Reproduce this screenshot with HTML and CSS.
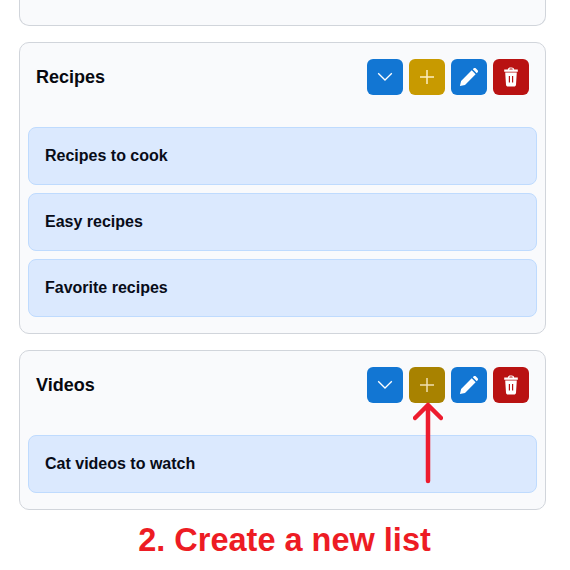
FILE: index.html
```html
<!DOCTYPE html>
<html lang="en">
<head>
<meta charset="utf-8">
<title>Lists</title>
<link rel="stylesheet" href="styles.css">
</head>
<body>
<main class="page">
  <section class="card card-cut"></section>
  <section class="card">
    <header class="card-head">
      <h2 class="card-title">Recipes</h2>
      <div class="actions">
        <button class="btn btn-blue" aria-label="Expand"><svg viewBox="0 0 20 20" class="ic"><path d="M3.200 6.300L10 13l6.800-6.700" fill="none" stroke="#fff" stroke-width="1.300"/></svg></button>
        <button class="btn btn-gold" aria-label="Add"><svg viewBox="0 0 20 20" class="ic"><path d="M10 3v14M3 10h14" fill="none" stroke="#fdeec2" stroke-width="1.500"/></svg></button>
        <button class="btn btn-blue" aria-label="Edit"><svg viewBox="-1 -1 22 22" class="ic"><path d="M0 20l1.300-5.600L13 2.700l4.300 4.300L5.600 18.700zM14.200 1.500l1-1c.7-.6 1.600-.6 2.200 0l2.100 2.100c.6.600.6 1.500 0 2.200l-1 1z" fill="#fff"/></svg></button>
        <button class="btn btn-red" aria-label="Delete"><svg viewBox="0 0 20 20" class="ic"><path d="M6.800 2.600C6.800 1.200 8 .4 9.200.4h1.600c1.200 0 2.400.8 2.400 2.200h3.600v2.100H3.200V2.600zM8.300 2.600h3.400c0-.6-.4-1-.9-1H9.200c-.5 0-.9.400-.9 1zM4.200 5.600h11.600l-.8 12.200c-.1 1-.9 1.800-1.900 1.800H6.900c-1 0-1.800-.8-1.900-1.800zM7.800 9v6.500h1.200V9zM11 9v6.500h1.200V9z" fill="#fff" fill-rule="evenodd"/></svg></button>
      </div>
    </header>
    <ul class="items">
      <li class="item">Recipes to cook</li>
      <li class="item">Easy recipes</li>
      <li class="item">Favorite recipes</li>
    </ul>
  </section>
  <section class="card">
    <header class="card-head">
      <h2 class="card-title">Videos</h2>
      <div class="actions">
        <button class="btn btn-blue" aria-label="Expand"><svg viewBox="0 0 20 20" class="ic"><path d="M3.200 6.300L10 13l6.800-6.700" fill="none" stroke="#fff" stroke-width="1.300"/></svg></button>
        <button class="btn btn-gold-dark" aria-label="Add"><svg viewBox="0 0 20 20" class="ic"><path d="M10 3v14M3 10h14" fill="none" stroke="#f0e0b0" stroke-width="1.500"/></svg></button>
        <button class="btn btn-blue" aria-label="Edit"><svg viewBox="-1 -1 22 22" class="ic"><path d="M0 20l1.300-5.600L13 2.700l4.300 4.300L5.600 18.700zM14.200 1.500l1-1c.7-.6 1.600-.6 2.200 0l2.100 2.100c.6.600.6 1.500 0 2.200l-1 1z" fill="#fff"/></svg></button>
        <button class="btn btn-red" aria-label="Delete"><svg viewBox="0 0 20 20" class="ic"><path d="M6.800 2.600C6.800 1.200 8 .4 9.200.4h1.600c1.200 0 2.400.8 2.400 2.200h3.600v2.100H3.200V2.600zM8.300 2.600h3.400c0-.6-.4-1-.9-1H9.200c-.5 0-.9.400-.9 1zM4.200 5.600h11.600l-.8 12.200c-.1 1-.9 1.800-1.900 1.800H6.900c-1 0-1.800-.8-1.900-1.800zM7.800 9v6.500h1.200V9zM11 9v6.500h1.200V9z" fill="#fff" fill-rule="evenodd"/></svg></button>
      </div>
    </header>
    <ul class="items">
      <li class="item">Cat videos to watch</li>
    </ul>
  </section>
  <p class="caption">2. Create a new list</p>
  <svg class="arrow" viewBox="0 0 30 90" aria-hidden="true"><path d="M15 83V7M2 20L15 7l13 13" fill="none" stroke="#ed1c2e" stroke-width="4.500" stroke-linecap="round" stroke-linejoin="round"/></svg>
</main>
</body>
</html>
```
FILE: styles.css
```css
* { box-sizing: border-box; }
html, body { margin: 0; padding: 0; background: #fff; }
body { font-family: "Liberation Sans", Arial, sans-serif; color: #0f1220; overflow: hidden; }
.page { position: relative; width: 570px; height: 570px; padding: 0 24px 0 19px; display: flex; flex-direction: column; gap: 16px; }
.card { flex: none; background: #f9fafc; border: 1px solid #d1d5db; border-radius: 10px; padding: 8px 8px 16px; }
.card-cut { height: 26px; border-top: 0; border-top-left-radius: 0; border-top-right-radius: 0; padding: 0; }
.card-head { display: flex; justify-content: space-between; align-items: center; padding: 8px; margin-bottom: 24px; }
.card-title { margin: 0; font-size: 18px; font-weight: 700; line-height: 36px; color: #08090f; }
.actions { display: flex; gap: 6px; }
.btn { width: 36px; height: 36px; border: 0; border-radius: 6px; padding: 0; display: flex; align-items: center; justify-content: center; }
.btn-blue { background: #1276d3; }
.btn-gold { background: #c89a00; }
.btn-gold-dark { background: #a88200; }
.btn-red { background: #b91212; }
.ic { width: 20px; height: 20px; display: block; }
.items { list-style: none; margin: 0; padding: 0; display: flex; flex-direction: column; gap: 8px; }
.item { height: 58px; display: flex; align-items: center; padding: 0 16px; background: #dbe9fe; border: 1px solid #bfdbfe; border-radius: 8px; font-size: 16px; font-weight: 700; color: #080c18; }
.caption { flex: none; margin: 0 0 0 4px; text-align: center; font-size: 32.500px; font-weight: 700; line-height: 28px; color: #ed1c24; }
.arrow { position: absolute; left: 412.500px; top: 398px; width: 30px; height: 90px; }
```
